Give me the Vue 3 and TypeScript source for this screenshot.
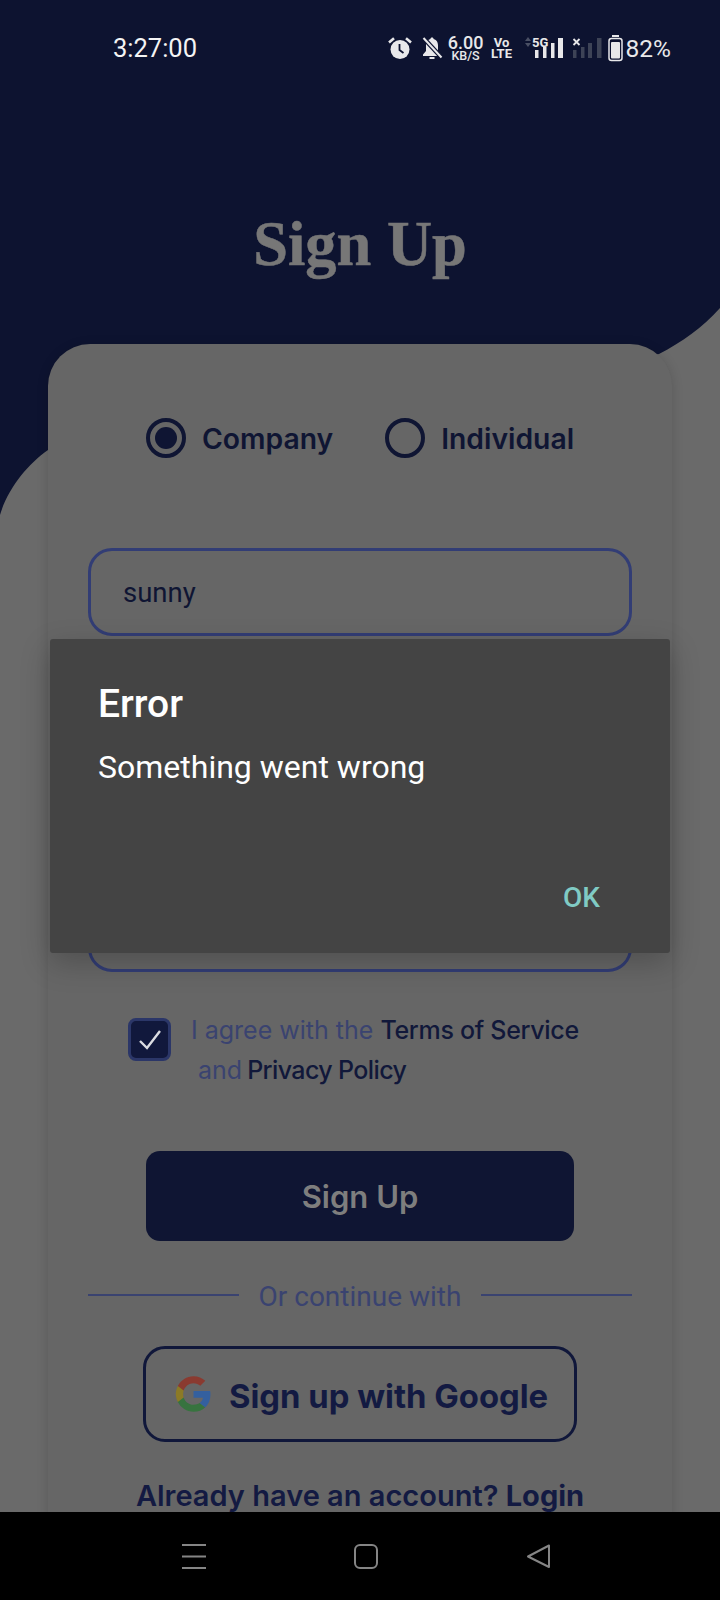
<template>
  <div class="screen">
    <svg class="backdrop" width="720" height="540" viewBox="0 0 720 540">
      <path d="M0 0H720V308C702 328 682 342 659 354L48 450C28 464 8 488 0 515Z" fill="#0d1330" />
    </svg>

    <main class="page">
      <header class="status">
        <span class="clock">3:27:00</span>
        <div class="status-icons">
          <svg width="24" height="24" viewBox="0 0 24 24">
            <circle cx="12" cy="13.5" r="9.5" fill="#e8e8ea" />
            <path d="M1 6.5 6 2.2M23 6.5 18 2.2" stroke="#e8e8ea" stroke-width="2.6" />
            <path d="M11.5 8v6l4 3" fill="none" stroke="#0d1330" stroke-width="1.8" />
          </svg>
          <svg class="ic-bell" width="24" height="24" viewBox="0 0 24 24">
            <path d="M12 1.5c-1 0-1.6.7-1.6 1.6C7 4 6 6.8 6 9.5V15l-3 3.5V20h18v-1.500L18 15V9.500c0-2.700-1-5.500-4.400-6.400 0-.9-.6-1.600-1.600-1.600Z" fill="#e8e8ea" />
            <path d="M9.500 22h5" stroke="#e8e8ea" stroke-width="2" />
            <path d="M3 1.500 22 22" stroke="#0d1330" stroke-width="4.500" />
            <path d="M3.500 2 21.500 21.500" stroke="#e8e8ea" stroke-width="2" />
          </svg>
          <div class="speed"><b>6.00</b><small>KB/S</small></div>
          <div class="volte"><span>Vo</span><span>LTE</span></div>
          <svg class="ic-signal" width="40" height="28" viewBox="0 0 40 28">
            <path d="M1 7 4 3 7 7ZM1 9 4 13 7 9Z" fill="#4a5064" />
            <text x="8" y="13" class="net">5G</text>
            <g fill="#e8e8ea">
              <rect x="11" y="16" width="3.5" height="8" />
              <rect x="19" y="13" width="3.5" height="11" />
              <rect x="27" y="9" width="3.5" height="15" />
              <rect x="34" y="4" width="5" height="20" />
            </g>
          </svg>
          <svg class="ic-signal2" width="30" height="28" viewBox="0 0 30 28">
            <path d="M1.5 5 7.5 11M7.500 5 1.500 11" stroke="#e8e8ea" stroke-width="1.8" />
            <g fill="#3d4356">
              <rect x="1" y="16" width="3.5" height="8" />
              <rect x="9" y="13" width="3.5" height="11" />
              <rect x="16" y="9" width="4" height="15" />
              <rect x="25" y="4" width="4.5" height="20" />
            </g>
          </svg>
          <svg class="ic-battery" width="15" height="28" viewBox="0 0 15 28">
            <path d="M4 2h7" stroke="#e8e8ea" stroke-width="2" />
            <rect x="1" y="4.500" width="13" height="22" rx="2.500" fill="none" stroke="#e8e8ea" stroke-width="1.5" />
            <rect x="3" y="8" width="9" height="16.500" rx="1" fill="#e8e8ea" />
          </svg>
          <span class="percent">82%</span>
        </div>
      </header>

      <h1 class="title">Sign Up</h1>

      <section class="card">
        <div class="radios">
          <label v-for="opt in accountTypes" :key="opt.label" class="radio">
            <span class="dot" :class="{ on: opt.checked }"></span>
            <span class="radio-text">{{ opt.label }}</span>
          </label>
        </div>

        <div class="fields">
          <div v-for="(value, i) in fields" :key="i" class="field">{{ value }}</div>
        </div>

        <div class="agree">
          <span class="box">
            <svg width="24" height="22" viewBox="0 0 24 22">
              <path d="M2 12 9 19 22 2" fill="none" stroke="#dcdde2" stroke-width="2.4" />
            </svg>
          </span>
          <p>
            <span class="line">I agree with the <em>Terms of Service</em></span>
            <span class="line second">and <em>Privacy Policy</em></span>
          </p>
        </div>

        <button class="submit" type="button">Sign Up</button>

        <div class="divider">
          <i></i>
          <span>Or continue with</span>
          <i></i>
        </div>

        <button class="google" type="button">
          <svg width="37" height="38" viewBox="0 0 48 48">
            <path fill="#34609f" d="M46 24.500c0-1.600-.1-3.100-.4-4.500H24v9h12.400c-.5 2.900-2.200 5.300-4.600 6.900l7.300 5.700C43.400 37.600 46 31.600 46 24.500Z" />
            <path fill="#37733f" d="M24 47c6.200 0 11.400-2 15.100-5.500l-7.300-5.700c-2 1.400-4.600 2.200-7.800 2.200-6 0-11-4-12.800-9.500H3.700v5.900C7.500 41.800 15.200 47 24 47Z" />
            <path fill="#8c7a26" d="M11.200 28.500c-.5-1.400-.7-2.900-.7-4.500s.3-3.100.7-4.500v-5.900H3.700C2 16.900 1 20.300 1 24s1 7.100 2.700 10.400l7.500-5.900Z" />
            <path fill="#8a3a30" d="M24 10c3.400 0 6.400 1.200 8.800 3.400l6.500-6.500C35.400 3.300 30.200 1 24 1 15.200 1 7.500 6.200 3.700 13.600l7.500 5.900C13 14 18 10 24 10Z" />
          </svg>
          <span class="google-text">Sign up with Google</span>
        </button>

        <p class="login">Already have an account? <b>Login</b></p>
      </section>
    </main>

    <footer class="nav">
      <svg width="26" height="26" viewBox="0 0 26 26">
        <path d="M1 2H25M1 13.500H25M1 25H25" stroke="#858585" stroke-width="2" />
      </svg>
      <svg width="26" height="26" viewBox="0 0 26 26">
        <rect x="1" y="2" width="22" height="23" rx="5" fill="none" stroke="#858585" stroke-width="2" />
      </svg>
      <svg width="26" height="26" viewBox="0 0 26 26">
        <path d="M23 2.500V24L2 13.500Z" fill="none" stroke="#858585" stroke-width="2" stroke-linejoin="round" />
      </svg>
    </footer>

    <div class="dialog">
      <h2>Error</h2>
      <p>Something went wrong</p>
      <button type="button">OK</button>
    </div>
  </div>
</template>

<script setup lang="ts">
interface AccountType {
  label: string
  checked: boolean
}

const accountTypes: AccountType[] = [
  { label: 'Company', checked: true },
  { label: 'Individual', checked: false },
]

const fields: string[] = ['sunny', '', '', '']
</script>

<style>
html,
body {
  margin: 0;
  background: #000;
}
</style>

<style scoped>
.screen {
  position: relative;
  display: flex;
  flex-direction: column;
  width: 720px;
  height: 1600px;
  overflow: hidden;
  background: #6a6a6a;
  font-family: Inter, 'Noto Sans', sans-serif;
  color: #0f1533;
}

.backdrop {
  position: absolute;
  top: 0;
  left: 0;
}

.page {
  position: relative;
  flex: 1;
  min-height: 0;
  overflow: hidden;
}

.status {
  display: flex;
  justify-content: space-between;
  align-items: center;
  height: 96px;
  padding: 0 49px 0 113px;
  font-family: Roboto, sans-serif;
  color: #e8e8ea;
}

.clock {
  font-size: 25.5px;
  color: #f4f4f4;
}

.status-icons {
  display: flex;
  align-items: center;
}

.ic-bell {
  margin-left: 8px;
}

.speed {
  display: flex;
  flex-direction: column;
  align-items: center;
  width: 34px;
  margin-left: 5px;
}

.speed b {
  height: 15px;
  font-size: 18px;
  font-weight: 500;
  line-height: 15px;
}

.speed small {
  height: 11px;
  font-size: 12.5px;
  font-weight: 500;
  line-height: 11px;
}

.volte {
  display: flex;
  flex-direction: column;
  align-items: center;
  width: 26px;
  margin-left: 6px;
  font-size: 13px;
  font-weight: 700;
  line-height: 11px;
}

.ic-signal {
  margin-left: 9px;
}

.net {
  font-family: Roboto, sans-serif;
  font-size: 13px;
  font-weight: 700;
  fill: #e8e8ea;
}

.ic-signal2 {
  margin-left: 8px;
}

.ic-battery {
  margin-left: 6px;
}

.percent {
  margin-left: 3px;
  font-size: 24.5px;
}

.title {
  height: 135px;
  margin: 113px 0 0;
  font-family: 'Liberation Serif', serif;
  font-size: 62.5px;
  font-weight: 700;
  line-height: 70px;
  text-align: center;
  color: #777;
  -webkit-text-stroke: 0.5px #777;
}

.card {
  height: 1300px;
  margin: 0 48px;
  padding: 74px 40px 0;
  box-sizing: border-box;
  background: #666;
  border-radius: 42px;
  box-shadow: 0 2px 12px rgba(0, 0, 0, 0.16);
}

.radios {
  display: flex;
  justify-content: center;
  gap: 52px;
}

.radio {
  display: flex;
  align-items: center;
  gap: 16px;
  height: 40px;
  font-size: 28.3px;
  font-weight: 600;
}

.radio-text {
  padding-top: 2px;
}

.dot {
  position: relative;
  width: 40px;
  height: 40px;
  box-sizing: border-box;
  border: 4px solid #0f1533;
  border-radius: 50%;
}

.dot.on::after {
  content: '';
  position: absolute;
  inset: 5px;
  background: #0f1533;
  border-radius: 50%;
}

.fields {
  display: flex;
  flex-direction: column;
  gap: 24px;
  margin-top: 90px;
}

.field {
  height: 88px;
  padding-left: 32px;
  box-sizing: border-box;
  border: 3px solid #323d75;
  border-radius: 24px;
  font-family: Roboto, sans-serif;
  font-size: 27.5px;
  line-height: 83px;
}

.agree {
  display: flex;
  margin: 46px 0 0 40px;
}

.box {
  display: flex;
  flex: none;
  justify-content: center;
  align-items: center;
  width: 43px;
  height: 43px;
  box-sizing: border-box;
  background: #11183c;
  border: 3px solid #2b3668;
  border-radius: 8px;
}

.agree p {
  margin: -8px 0 0 20px;
  font-size: 25px;
  line-height: 40px;
  color: #3a4370;
  white-space: nowrap;
}

.line {
  display: block;
}

.second {
  padding-left: 7px;
}

.agree em {
  font-style: normal;
  font-weight: 500;
  letter-spacing: -0.3px;
  color: #11183a;
}

.agree .second em {
  margin-left: -2px;
  letter-spacing: -0.6px;
}

.submit {
  display: block;
  width: 428px;
  height: 90px;
  margin: 61px auto 0;
  background: #0f1533;
  border: none;
  border-radius: 14px;
  font-family: Inter, sans-serif;
  font-size: 31px;
  font-weight: 600;
  color: #7e7e7e;
}

.divider {
  display: flex;
  justify-content: space-between;
  align-items: center;
  height: 40px;
  margin-top: 35px;
  font-family: Roboto, sans-serif;
  font-size: 28px;
  color: #3a4370;
}

.divider i {
  width: 151px;
  height: 2px;
  margin-top: -2px;
  background: #3a4370;
}

.google {
  display: flex;
  align-items: center;
  gap: 17px;
  width: 434px;
  height: 96px;
  margin: 30px auto 0;
  padding: 0 0 0 29px;
  box-sizing: border-box;
  background: none;
  border: 3px solid #10173a;
  border-radius: 22px;
  font-family: Inter, sans-serif;
  font-size: 32.8px;
  font-weight: 700;
  color: #131a42;
}

.google-text {
  padding-top: 3px;
}

.login {
  margin: 34px 0 0;
  font-size: 29px;
  font-weight: 600;
  line-height: 40px;
  text-align: center;
  color: #131a42;
  white-space: nowrap;
}

.login b {
  font-weight: 700;
}

.nav {
  position: relative;
  display: flex;
  flex: none;
  justify-content: space-between;
  align-items: center;
  height: 88px;
  padding: 0 168px 0 181px;
  box-sizing: border-box;
  background: #000;
}

.dialog {
  position: absolute;
  top: 639px;
  left: 50px;
  width: 620px;
  height: 314px;
  padding: 41px 48px 0;
  box-sizing: border-box;
  background: #444;
  border-radius: 3px;
  box-shadow: 0 10px 30px rgba(0, 0, 0, 0.22);
  font-family: Roboto, sans-serif;
  color: #fff;
}

.dialog h2 {
  margin: 0;
  font-size: 39px;
  font-weight: 500;
  line-height: 48px;
}

.dialog p {
  margin: 17px 0 0;
  font-size: 32px;
  line-height: 44px;
}

.dialog button {
  position: absolute;
  right: 70px;
  bottom: 38px;
  padding: 0;
  background: none;
  border: none;
  font-family: Roboto, sans-serif;
  font-size: 28px;
  font-weight: 500;
  line-height: 34px;
  color: #80cbc4;
}
</style>
